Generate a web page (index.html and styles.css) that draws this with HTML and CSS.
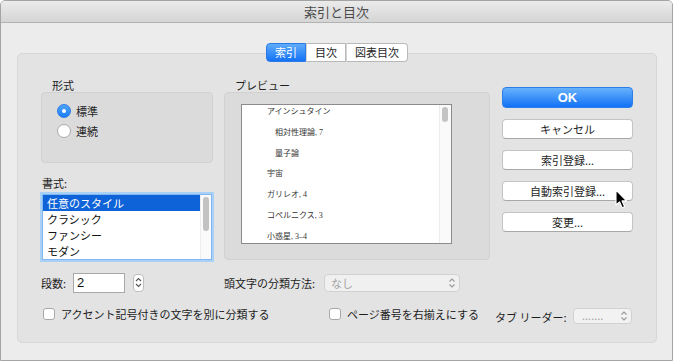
FILE: index.html
```html
<!DOCTYPE html>
<html lang="ja">
<head>
    <meta charset="UTF-8">
    <title>索引と目次</title>
    <link rel="stylesheet" href="styles.css">
</head>
<body>
    <div class="window">
        <div class="titlebar">索引と目次</div>
        <div class="content">
            <div class="tabs">
                <span class="tab active">索引</span>
                <span class="tab">目次</span>
                <span class="tab">図表目次</span>
            </div>

            <div class="panel">
                <div class="top">
                    <div class="left-col">
                        <div class="group-label">形式</div>
                        <div class="inset radio-box">
                            <div class="radio-row"><span class="radio on"></span>標準</div>
                            <div class="radio-row"><span class="radio"></span>連続</div>
                        </div>
                        <div class="style-label">書式:</div>
                        <div class="list">
                            <ul>
                                <li class="sel">任意のスタイル</li>
                                <li>クラシック</li>
                                <li>ファンシー</li>
                                <li>モダン</li>
                            </ul>
                            <div class="scroll"><span class="thumb"></span></div>
                        </div>
                    </div>

                    <div class="preview-col">
                        <div class="group-label">プレビュー</div>
                        <div class="inset preview-box">
                            <div class="page">
                                <div class="entries">
                                    <div>アインシュタイン</div>
                                    <div class="sub">相対性理論, 7</div>
                                    <div class="sub">量子論</div>
                                    <div>宇宙</div>
                                    <div>ガリレオ, 4</div>
                                    <div>コペルニクス, 3</div>
                                    <div>小惑星, 3–4</div>
                                </div>
                                <div class="vscroll"><span class="thumb"></span></div>
                            </div>
                        </div>
                    </div>

                    <div class="buttons">
                        <div class="btn ok">OK</div>
                        <div class="btn">キャンセル</div>
                        <div class="btn">索引登録...</div>
                        <div class="btn">自動索引登録...</div>
                        <div class="btn">変更...</div>
                    </div>
                </div>

                <div class="row mid">
                    <span class="num-label">段数:</span>
                    <span class="field">2</span>
                    <span class="stepper">
                        <svg width="9" height="15" viewBox="0 0 9 15"><path d="M2 6 L4.5 3.5 L7 6 M2 9 L4.5 11.5 L7 9" fill="none" stroke="#555" stroke-width="1.1"/></svg>
                    </span>
                    <span class="cat-label">頭文字の分類方法:</span>
                    <span class="select wide">なし
                        <svg class="chev" width="8" height="12" viewBox="0 0 8 12"><path d="M1.5 4.5 L4 2 L6.5 4.5 M1.5 7.5 L4 10 L6.5 7.5" fill="none" stroke="#9a9a9a" stroke-width="1.1"/></svg>
                    </span>
                </div>

                <div class="row bottom">
                    <label class="check first"><span class="box"></span>アクセント記号付きの文字を別に分類する</label>
                    <label class="check second"><span class="box"></span>ページ番号を右揃えにする</label>
                    <span class="leader-label">タブ リーダー:</span>
                    <span class="select small">.......
                        <svg class="chev" width="8" height="12" viewBox="0 0 8 12"><path d="M1.5 4.5 L4 2 L6.5 4.5 M1.5 7.5 L4 10 L6.5 7.5" fill="none" stroke="#9a9a9a" stroke-width="1.1"/></svg>
                    </span>
                </div>
            </div>
        </div>

        <!-- mouse pointer over the dialog -->
        <svg class="cursor" width="14" height="21" viewBox="0 0 14 21">
            <path d="M1 1 L1 16 L4.5 12.8 L7.2 18.8 L9.6 17.8 L7 11.9 L11.6 11.9 Z" fill="#000" stroke="#fff" stroke-width="1.1" stroke-linejoin="round"/>
        </svg>
    </div>
</body>
</html>
```

FILE: styles.css
```css
body {
    margin: 0;
    background: #fff;
    font-family: "Noto Sans CJK JP", sans-serif;
    font-size: 11px;
    color: #1e1e1e;
}
.window {
    position: relative;
    width: 673px;
    height: 361px;
    box-sizing: border-box;
    border: 1px solid #a4a4a4;
    border-radius: 5px 5px 0 0;
    background: #ececec;
    overflow: hidden;
}
.titlebar {
    height: 21px;
    line-height: 21px;
    border-bottom: 1px solid #b3b3b3;
    background: linear-gradient(#ebebeb, #d5d5d5);
    text-align: center;
    font-size: 13px;
    color: #4b4b4b;
}
.content {
    padding: 20px 0 0 16px;
}
.tabs {
    position: relative;
    z-index: 1;
    display: flex;
    justify-content: center;
    width: 640px;
    height: 19px;
}
.tab {
    height: 17px;
    line-height: 17px;
    padding: 0 8px;
    background: #fff;
    border: 1px solid #b9b9b9;
    border-left: 1px solid #d4d4d4;
    color: #1e1e1e;
}
.tab:first-child {
    border-left: 1px solid #b9b9b9;
    border-radius: 4px 0 0 4px;
}
.tab:last-child {
    border-radius: 0 4px 4px 0;
}
.tab.active {
    background: linear-gradient(#60acfb, #1472f5);
    border-color: #2b7ae6;
    color: #fff;
}
.panel {
    margin-top: -9px;
    width: 640px;
    height: 290px;
    box-sizing: border-box;
    padding: 24px 0 0 23px;
    background: #e3e3e3;
    border: 1px solid #d7d7d7;
    border-radius: 5px;
}
.top {
    display: flex;
}
.group-label {
    height: 14px;
    line-height: 14px;
    margin-left: 11px;
}
.inset {
    box-sizing: border-box;
    background: #dbdbdb;
    border: 1px solid #d1d1d1;
    border-radius: 4px;
}
.left-col {
    width: 172px;
}
.radio-box {
    height: 71px;
    padding-top: 8px;
}
.radio-row {
    display: flex;
    align-items: center;
    height: 20px;
    padding-left: 15px;
    gap: 5px;
}
.radio {
    position: relative;
    width: 14px;
    height: 14px;
    box-sizing: border-box;
    border: 1px solid #a9a9a9;
    border-radius: 50%;
    background: #fff;
}
.radio.on {
    border-color: #2a7ce4;
    background: linear-gradient(#4ea4fc, #1a7bf5);
}
.radio.on::after {
    content: "";
    position: absolute;
    left: 4px;
    top: 4px;
    width: 4px;
    height: 4px;
    border-radius: 50%;
    background: #fff;
}
.style-label {
    height: 14px;
    line-height: 14px;
    margin: 13px 0 0 1px;
}
.list {
    display: flex;
    margin: 4px 0 0 1px;
    width: 170px;
    height: 66px;
    box-sizing: border-box;
    border: 1px solid #82b6ee;
    box-shadow: 0 0 0 2px #a9d0f7;
    background: #fff;
}
.list ul {
    flex: 1;
    list-style: none;
    margin: 0;
    padding: 0;
}
.list li {
    height: 16px;
    line-height: 16px;
    padding-left: 4px;
    color: #111;
}
.list li.sel {
    background: #0f63d8;
    color: #fff;
}
.scroll {
    width: 11px;
    border-left: 1px solid #ededed;
    background: #fafafa;
    padding: 2px 0 0 2px;
    box-sizing: border-box;
}
.scroll .thumb {
    display: block;
    width: 6px;
    height: 34px;
    border-radius: 3px;
    background: #c2c2c2;
}
.preview-col {
    width: 266px;
    margin-left: 11px;
}
.preview-box {
    height: 168px;
    padding: 11px 0 0 16px;
}
.page {
    display: flex;
    width: 211px;
    height: 140px;
    box-sizing: border-box;
    border: 1px solid #8b8b8b;
    background: #fff;
    overflow: hidden;
}
.entries {
    flex: 1;
    margin-top: -3px;
    padding-left: 25px;
    font-family: "Liberation Serif", "Noto Sans CJK JP", serif;
    font-size: 8px;
    line-height: 20.8px;
    color: #333;
}
.entries .sub {
    padding-left: 8px;
}
.vscroll {
    width: 12px;
    border-left: 1px solid #ececec;
    background: #fafafa;
    padding: 2px 0 0 2px;
    box-sizing: border-box;
}
.vscroll .thumb {
    display: block;
    width: 6px;
    height: 15px;
    border-radius: 3px;
    background: #c4c4c4;
}
.buttons {
    display: flex;
    flex-direction: column;
    gap: 11px;
    width: 131px;
    margin-left: 12px;
    padding-top: 9px;
}
.btn {
    height: 20px;
    line-height: 18px;
    box-sizing: border-box;
    border: 1px solid #c4c4c4;
    border-bottom-color: #a8a8a8;
    border-radius: 4px;
    background: #fff;
    text-align: center;
    color: #1e1e1e;
}
.btn.ok {
    height: 21px;
    line-height: 19px;
    border-color: #2d7ee6;
    background: linear-gradient(#68b2fc, #1272f6);
    color: #fff;
    font-family: "Liberation Sans", sans-serif;
    font-weight: bold;
    font-size: 13px;
}
.row {
    display: flex;
}
.mid {
    margin-top: 13px;
    height: 20px;
    align-items: center;
}
.num-label {
    width: 32px;
}
.field {
    width: 52px;
    height: 20px;
    line-height: 18px;
    box-sizing: border-box;
    padding-left: 3px;
    border: 1px solid #a8a8a8;
    background: #fff;
    font-family: "Liberation Sans", sans-serif;
    font-size: 13px;
    color: #111;
}
.stepper {
    display: flex;
    margin-left: 8px;
    width: 11px;
    height: 18px;
    box-sizing: border-box;
    border: 1px solid #bdbdbd;
    border-radius: 4px;
    background: #fff;
}
.cat-label {
    width: 100px;
    margin-left: 80px;
}
.select {
    position: relative;
    height: 18px;
    line-height: 16px;
    box-sizing: border-box;
    padding-left: 6px;
    border: 1px solid #d1d1d1;
    border-radius: 4px;
    background: #f0f0f0;
    color: #a4a4a4;
}
.select.wide {
    width: 136px;
}
.select .chev {
    position: absolute;
    right: 3px;
    top: 2px;
}
.bottom {
    margin-top: 14px;
    height: 18px;
    align-items: flex-start;
}
.check {
    display: flex;
    gap: 6px;
    line-height: 14px;
}
.check .box {
    width: 12px;
    height: 12px;
    margin-top: 1px;
    box-sizing: border-box;
    border: 1px solid #a9a9a9;
    border-radius: 3px;
    background: #fff;
}
.check.first {
    width: 286px;
    padding-left: 2px;
}
.check.second {
    width: 166px;
}
.leader-label {
    width: 78px;
    line-height: 18px;
    margin-top: 1px;
}
.select.small {
    width: 59px;
    height: 16px;
    line-height: 12px;
    margin-top: 1px;
    padding-left: 8px;
    background: #f2f2f2;
}
.select.small .chev {
    top: 1px;
}
.cursor {
    position: absolute;
    left: 614px;
    top: 188px;
}
```
